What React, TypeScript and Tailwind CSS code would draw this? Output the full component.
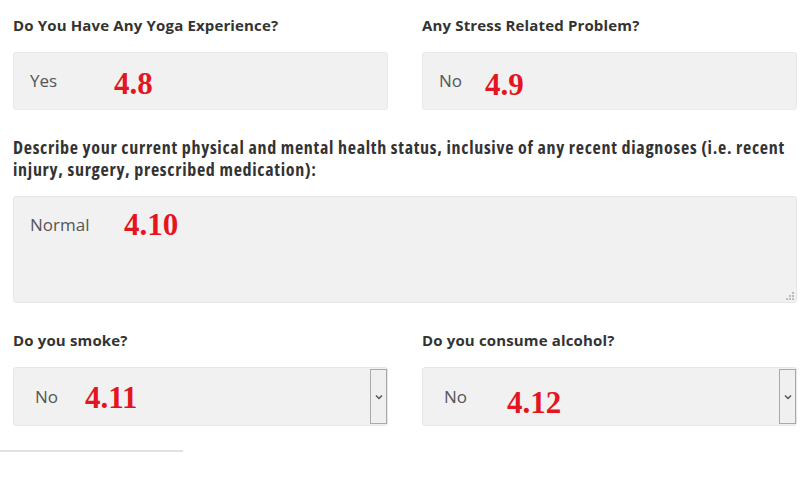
import React from "react";

const font = { fontFamily: "'Open Sans', 'Noto Sans', sans-serif" };

const Mark = ({ text, className }: { text: string; className: string }) => (
	<span
		className={`absolute text-[31px] leading-[30px] font-bold text-[#e3161f] ${className}`}
		style={{ fontFamily: "'Liberation Serif', 'Times New Roman', serif" }}
	>
		{text}
	</span>
);

const Field = ({ value, mark, markClass }: { value: string; mark: string; markClass: string }) => (
	<div className="relative h-[58px] rounded-[3px] border border-[#e9e9e9] bg-[#f1f1f1] flex items-center pl-[16px] text-[17px] text-[#555]">
		{value}
		<Mark text={mark} className={markClass} />
	</div>
);

const SelectBox = ({ mark, markClass }: { mark: string; markClass: string }) => (
	<div className="relative h-[59px] rounded-[3px] border border-[#e6e6e6] bg-[#f1f1f1] flex items-center text-[17px] text-[#555]">
		<span className="pl-[21px] flex-1">No</span>
		<Mark text={mark} className={markClass} />
		<div className="self-stretch w-[17px] my-[1px] border border-[#a9a9a9] bg-[#f0f0f0] flex items-center justify-center">
			<svg width="8" height="6" viewBox="0 0 8 6">
				<path d="M1 1.5 L4 4.5 L7 1.5" fill="none" stroke="#555" strokeWidth="1.5" />
			</svg>
		</div>
	</div>
);

export default function App() {
	return (
		<div className="w-[806px] h-[478px] bg-white overflow-hidden" style={font}>
			<div className="pl-[13px] pr-[9px] pt-[15px] grid grid-cols-2 gap-x-[34px]">
				<div>
					<h3 className="text-[15px] leading-[20px] font-bold text-[#333] mb-[17px] tracking-[0.15px]">
						Do You Have Any Yoga Experience?
					</h3>
					<Field value="Yes" mark="4.8" markClass="left-[100px] top-[16px]" />
				</div>
				<div>
					<h3 className="text-[15px] leading-[20px] font-bold text-[#333] mb-[17px] tracking-[0.15px]">
						Any Stress Related Problem?
					</h3>
					<Field value="No" mark="4.9" markClass="left-[62px] top-[17px]" />
				</div>

				<div className="col-span-2 mt-[26px]">
					<h3 className="text-[18px] leading-[22px] font-bold text-[#333] mb-[16px] font-stretch-condensed tracking-[0.7px] whitespace-nowrap">
						Describe your current physical and mental health status, inclusive of any recent diagnoses (i.e. recent
						<br />
						injury, surgery, prescribed medication):
					</h3>
					<div className="relative h-[107px] rounded-[3px] border border-[#e6e6e6] bg-[#f1f1f1] pl-[16px] pt-[16px] text-[17px] leading-[24px] text-[#555]">
						Normal
						<Mark text="4.10" className="left-[110px] top-[13px]" />
						<svg className="absolute right-[2px] bottom-[2px]" width="8" height="8" viewBox="0 0 8 8">
							<rect x="6" y="0" width="2" height="2" fill="#bbb" />
							<rect x="3" y="3" width="2" height="2" fill="#bbb" />
							<rect x="6" y="3" width="2" height="2" fill="#bbb" />
							<rect x="0" y="6" width="2" height="2" fill="#bbb" />
							<rect x="3" y="6" width="2" height="2" fill="#bbb" />
							<rect x="6" y="6" width="2" height="2" fill="#bbb" />
						</svg>
					</div>
				</div>

				<div className="mt-[27px]">
					<h3 className="text-[15px] leading-[20px] font-bold text-[#333] mb-[17px] tracking-[0.15px]">Do you smoke?</h3>
					<SelectBox mark="4.11" markClass="left-[71px] top-[15px]" />
				</div>
				<div className="mt-[27px]">
					<h3 className="text-[15px] leading-[20px] font-bold text-[#333] mb-[17px] tracking-[0.15px]">Do you consume alcohol?</h3>
					<SelectBox mark="4.12" markClass="left-[84px] top-[20px]" />
				</div>
			</div>
			<div className="mt-[24px] w-[183px] h-[2px] bg-[#e2e2e2]" />
		</div>
	);
}
